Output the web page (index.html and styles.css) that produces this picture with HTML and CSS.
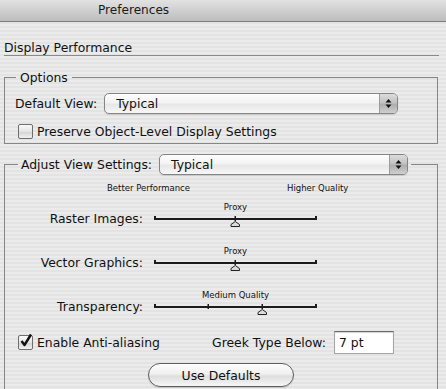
FILE: index.html
```html
<!DOCTYPE html>
<html>
<head>
  <meta charset="UTF-8">
  <title>Preferences</title>
  <link rel="stylesheet" href="styles.css">
</head>
<body>
  <div class="window">
    <div class="titlebar">Preferences</div>
    <div class="content">
      <div class="section-title">Display Performance</div>

      <fieldset class="group options">
        <legend>Options</legend>
        <div class="group-body">
          <div class="field-row">
            <span class="label">Default View:</span>
            <div class="popup default-view">
              <span class="value">Typical</span>
              <span class="arrows">
                <svg width="7" height="11" viewBox="0 0 7 11"><path d="M3.5 1 L6.5 4.5 L0.5 4.5 Z M3.5 10 L6.5 6.5 L0.5 6.5 Z" fill="#111"/></svg>
              </span>
            </div>
          </div>
          <label class="check"><span class="box"></span>Preserve Object-Level Display Settings</label>
        </div>
      </fieldset>

      <fieldset class="group adjust">
        <legend>
          <span class="label">Adjust View Settings:</span>
          <div class="popup adjust-view">
            <span class="value">Typical</span>
            <span class="arrows">
              <svg width="7" height="11" viewBox="0 0 7 11"><path d="M3.5 1 L6.5 4.5 L0.5 4.5 Z M3.5 10 L6.5 6.5 L0.5 6.5 Z" fill="#111"/></svg>
            </span>
          </div>
        </legend>
        <div class="group-body">
          <div class="scale-heads">
            <span>Better Performance</span>
            <span>Higher Quality</span>
          </div>

          <div class="sliders">
            <div class="slider">
              <span></span><span class="caption">Proxy</span>
              <span class="label">Raster Images:</span>
              <svg class="track" width="163" height="16" viewBox="0 0 163 16">
                <rect x="0" y="6" width="163" height="2" fill="#1c1c1c"/>
                <rect x="0" y="4" width="2" height="4" fill="#1c1c1c"/>
                <rect x="161" y="4" width="2" height="4" fill="#1c1c1c"/>
                <rect x="80.5" y="4" width="1.5" height="5" fill="#1c1c1c"/>
                <path d="M81.25 9.5 L85.5 12.5 L85.5 14.5 L77 14.5 L77 12.5 Z" fill="#dcdcdc" stroke="#222" stroke-width="1"/>
              </svg>
            </div>
            <div class="slider">
              <span></span><span class="caption">Proxy</span>
              <span class="label">Vector Graphics:</span>
              <svg class="track" width="163" height="16" viewBox="0 0 163 16">
                <rect x="0" y="6" width="163" height="2" fill="#1c1c1c"/>
                <rect x="0" y="4" width="2" height="4" fill="#1c1c1c"/>
                <rect x="161" y="4" width="2" height="4" fill="#1c1c1c"/>
                <rect x="80.5" y="4" width="1.5" height="5" fill="#1c1c1c"/>
                <path d="M81.25 9.5 L85.5 12.5 L85.5 14.5 L77 14.5 L77 12.5 Z" fill="#dcdcdc" stroke="#222" stroke-width="1"/>
              </svg>
            </div>
            <div class="slider">
              <span></span><span class="caption">Medium Quality</span>
              <span class="label">Transparency:</span>
              <svg class="track" width="163" height="16" viewBox="0 0 163 16">
                <rect x="0" y="6" width="163" height="2" fill="#1c1c1c"/>
                <rect x="0" y="4" width="2" height="4" fill="#1c1c1c"/>
                <rect x="161" y="4" width="2" height="4" fill="#1c1c1c"/>
                <rect x="53.5" y="4" width="1.5" height="5" fill="#1c1c1c"/>
                <rect x="107.5" y="4" width="1.5" height="5" fill="#1c1c1c"/>
                <path d="M108.25 9.5 L112.5 12.5 L112.5 14.5 L104 14.5 L104 12.5 Z" fill="#dcdcdc" stroke="#222" stroke-width="1"/>
              </svg>
            </div>
          </div>

          <div class="anti-row">
            <label class="check">
              <span class="box checked">
                <svg width="14" height="16" viewBox="0 0 14 16"><path d="M2.5 8 L5.5 12 L12 1.5" fill="none" stroke="#111" stroke-width="2.4" stroke-linejoin="round"/></svg>
              </span>Enable Anti-aliasing
            </label>
            <div class="greek">
              <span class="label">Greek Type Below:</span>
              <input class="text-field" value="7 pt">
            </div>
          </div>

          <div class="button-row">
            <button class="pill">Use Defaults</button>
          </div>
        </div>
      </fieldset>
    </div>
  </div>
</body>
</html>
```
FILE: styles.css
```css
* {
  box-sizing: border-box;
}
body {
  margin: 0;
  font-family: "DejaVu Sans", Verdana, sans-serif;
  font-size: 12.4px;
  color: #111;
}
.window {
  width: 446px;
  height: 389px;
  overflow: hidden;
  background: repeating-linear-gradient(#ebebeb 0 2px, #e3e3e3 2px 4px);
}

.titlebar {
  height: 22px;
  line-height: 21px;
  padding-left: 98px;
  font-size: 12.1px;
  color: #1a1a1a;
  background: linear-gradient(#e2e2e2, #cfcfcf 50%, #bdbdbd);
  border-bottom: 1px solid #7c7c7c;
}

.content {
  padding-left: 4px;
}
.section-title {
  width: 435px;
  margin-top: 18px;
  line-height: 15px;
  height: 16px;
  border-bottom: 1px solid #8a8a8a;
}

.group {
  width: 434px;
  margin: 0;
  padding: 0;
  min-width: 0;
  border: 1px solid #868686;
}
.group legend {
  padding: 0 4px;
  margin-left: 11px;
  line-height: 15px;
}
.options {
  margin-top: 14px;
}
.adjust {
  margin-top: 10px;
  padding-bottom: 30px;
}
.adjust legend {
  display: flex;
  align-items: center;
  gap: 7px;
  padding: 0 3px;
  margin-left: 13px;
}
.group-body {
  padding: 8px 10px 4px;
}

.field-row {
  display: flex;
  align-items: center;
  gap: 7px;
}

.popup {
  display: flex;
  height: 21px;
  border: 1px solid #858585;
  border-radius: 5px;
  background: linear-gradient(#fdfdfd, #f3f3f3 45%, #e7e7e7 55%, #f7f7f7);
  box-shadow: 0 1px 1px rgba(0, 0, 0, 0.12);
  overflow: hidden;
}
.popup .value {
  flex: 1;
  padding-left: 11px;
  line-height: 19px;
}
.popup .arrows {
  width: 18px;
  display: flex;
  align-items: center;
  justify-content: center;
  border-left: 1px solid #9c9c9c;
  background: linear-gradient(#dcdcdc, #c2c2c2 45%, #aeaeae 55%, #cfcfcf);
}
.default-view {
  width: 294px;
}
.adjust-view {
  width: 249px;
}

.check {
  display: flex;
  align-items: center;
  gap: 4px;
  line-height: 15px;
}
.check .box {
  width: 15px;
  height: 15px;
  margin-left: 3px;
  position: relative;
  border: 1px solid #6e6e6e;
  border-radius: 2px;
  background: linear-gradient(#fafafa, #e4e4e4 50%, #d4d4d4 55%, #f2f2f2);
}
.check .box svg {
  position: absolute;
  left: 0;
  top: -3px;
}
.options .check {
  margin-top: 10px;
}

.scale-heads {
  display: flex;
  gap: 97px;
  padding-left: 92px;
  font-size: 8.5px;
  line-height: 11px;
}

.sliders {
  display: flex;
  flex-direction: column;
  gap: 14px;
  margin-top: 8px;
}
.slider {
  display: grid;
  grid-template-columns: 128px 163px;
  grid-template-rows: 10px 20px;
  column-gap: 11px;
}
.slider .caption {
  font-size: 8.5px;
  line-height: 10px;
  text-align: center;
}
.slider .label {
  text-align: right;
  line-height: 14px;
}

.anti-row {
  display: flex;
  align-items: center;
  height: 23px;
  margin-top: 11px;
  padding-right: 33px;
}
.greek {
  margin-left: auto;
  display: flex;
  align-items: center;
  gap: 8px;
}
.text-field {
  width: 60px;
  height: 23px;
  padding: 0 4px;
  font: inherit;
  color: #111;
  background: #fff;
  border: 1px solid #a4a4a4;
  border-top-color: #6c6c6c;
  box-shadow: inset 0 1px 1px rgba(0, 0, 0, 0.18);
}

.button-row {
  display: flex;
  justify-content: center;
  margin-top: 9px;
}
.pill {
  width: 146px;
  height: 24px;
  padding: 0;
  font: inherit;
  color: #111;
  border: 1px solid #5e5e5e;
  border-radius: 12px;
  background: linear-gradient(#fefefe, #f0f0f0 45%, #dedede 55%, #f6f6f6);
  box-shadow: 0 1px 1px rgba(0, 0, 0, 0.15);
}
```
